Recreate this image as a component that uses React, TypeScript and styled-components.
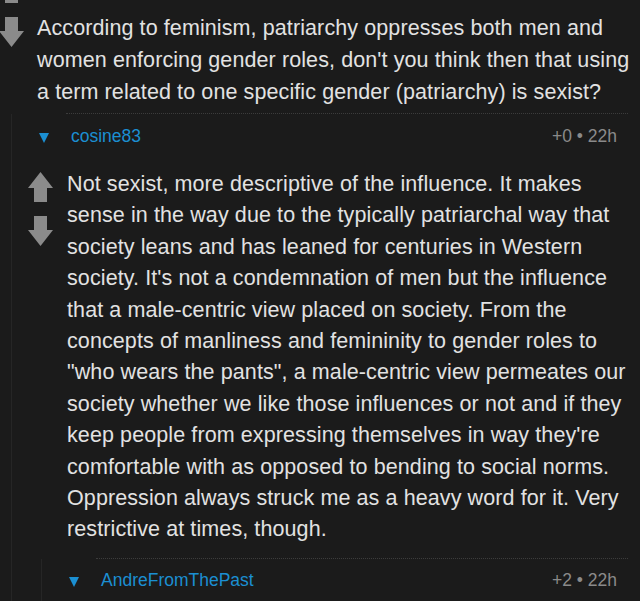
import React from "react";
import styled, { createGlobalStyle } from "styled-components";

type Reply = {
    author: string;
    score: string;
    age: string;
};

// lines split as the app wraps them
const topLines = [
    "According to feminism, patriarchy oppresses both men and",
    "women enforcing gender roles, don't you think then that using",
    "a term related to one specific gender (patriarchy) is sexist?",
];

const replyLines = [
    "Not sexist, more descriptive of the influence. It makes",
    "sense in the way due to the typically patriarchal way that",
    "society leans and has leaned for centuries in Western",
    "society. It's not a condemnation of men but the influence",
    "that a male-centric view placed on society. From the",
    "concepts of manliness and femininity to gender roles to",
    "\"who wears the pants\", a male-centric view permeates our",
    "society whether we like those influences or not and if they",
    "keep people from expressing themselves in way they're",
    "comfortable with as opposed to bending to social norms.",
    "Oppression always struck me as a heavy word for it. Very",
    "restrictive at times, though.",
];

const firstReply: Reply = { author: "cosine83", score: "+0", age: "22h" };
const secondReply: Reply = { author: "AndreFromThePast", score: "+2", age: "22h" };

function Arrow({ down }: { down?: boolean }) {
    return (
        <ArrowSvg width="25" height="30" viewBox="0 0 25 30" $down={down}>
            <path d="M12.5 0 L25 16 L19 16 L19 30 L6 30 L6 16 L0 16 Z" fill="#8b8b8b" />
        </ArrowSvg>
    );
}

function MetaRow({ reply }: { reply: Reply }) {
    return (
        <MetaStyle>
            <Caret />
            <Author>{reply.author}</Author>
            <Score>
                {reply.score} • {reply.age}
            </Score>
        </MetaStyle>
    );
}

function App() {
    return (
        <>
            <GlobalStyle />
            <Page>
                <CommentRow>
                    <VoteColumn $offset={-27} $left={-1}>
                        <Arrow />
                        <Arrow down />
                    </VoteColumn>
                    <Body $gap={13} $top={12}>
                        <CommentText $lh={32}>
                            {topLines.map((l) => (
                                <Line key={l}>{l}</Line>
                            ))}
                        </CommentText>
                        <Divider $top={5} />
                    </Body>
                </CommentRow>

                <Thread $left={11}>
                    <MetaRow reply={firstReply} />
                    <CommentRow>
                        <VoteColumn $offset={14} $left={16}>
                            <Arrow />
                            <Arrow down />
                        </VoteColumn>
                        <Body $gap={14} $top={11}>
                            <CommentText $lh={31.4}>
                                {replyLines.map((l) => (
                                    <Line key={l}>{l}</Line>
                                ))}
                            </CommentText>
                            <Divider $top={12} />
                        </Body>
                    </CommentRow>

                    <Thread $left={29}>
                        <MetaRow reply={secondReply} />
                    </Thread>
                </Thread>
            </Page>
        </>
    );
}
export default App;

//css
const GlobalStyle = createGlobalStyle`
    html, body {
        margin: 0;
        padding: 0;
        background: #1b1b1b;
    }
`;

const Page = styled.div`
    width: 640px;
    height: 601px;
    overflow: hidden;
    background: #1b1b1b;
    font-family: "Liberation Sans", Arial, sans-serif;
`;

const CommentRow = styled.div`
    display: flex;
    align-items: flex-start;
`;

const VoteColumn = styled.div<{ $offset: number; $left: number }>`
    display: flex;
    flex-direction: column;
    gap: 14px;
    flex: none;
    width: 25px;
    margin-top: ${(p) => p.$offset}px;
    margin-left: ${(p) => p.$left}px;
`;

const ArrowSvg = styled.svg<{ $down?: boolean }>`
    display: block;
    transform: ${(p) => (p.$down ? "rotate(180deg)" : "none")};
`;

const Body = styled.div<{ $gap: number; $top: number }>`
    flex: 1;
    min-width: 0;
    margin-left: ${(p) => p.$gap}px;
    padding-top: ${(p) => p.$top}px;
    padding-right: 12px;
`;

const CommentText = styled.p<{ $lh: number }>`
    margin: 0;
    font-size: 21.5px;
    letter-spacing: 0.1px;
    line-height: ${(p) => p.$lh}px;
    color: #e2e2e2;
    white-space: nowrap;
`;

const Line = styled.span`
    display: block;
`;

const Divider = styled.div<{ $top: number }>`
    margin-top: ${(p) => p.$top}px;
    margin-left: 29px;
    border-top: 1px dotted #3c3c3c;
`;

const Thread = styled.div<{ $left: number }>`
    margin-left: ${(p) => p.$left}px;
    border-left: 1px solid #262626;
`;

const MetaStyle = styled.div`
    display: flex;
    align-items: center;
    height: 44px;
    padding-right: 23px;
    font-size: 17.5px;
`;

const Caret = styled.span`
    width: 0;
    height: 0;
    margin-left: 27px;
    margin-top: 3px;
    border-left: 5.5px solid transparent;
    border-right: 5.5px solid transparent;
    border-top: 10px solid #1b8fd2;
`;

const Author = styled.span`
    margin-left: 22px;
    color: #1b8fd2;
`;

const Score = styled.span`
    margin-left: auto;
    color: #8a8a8a;
`;
